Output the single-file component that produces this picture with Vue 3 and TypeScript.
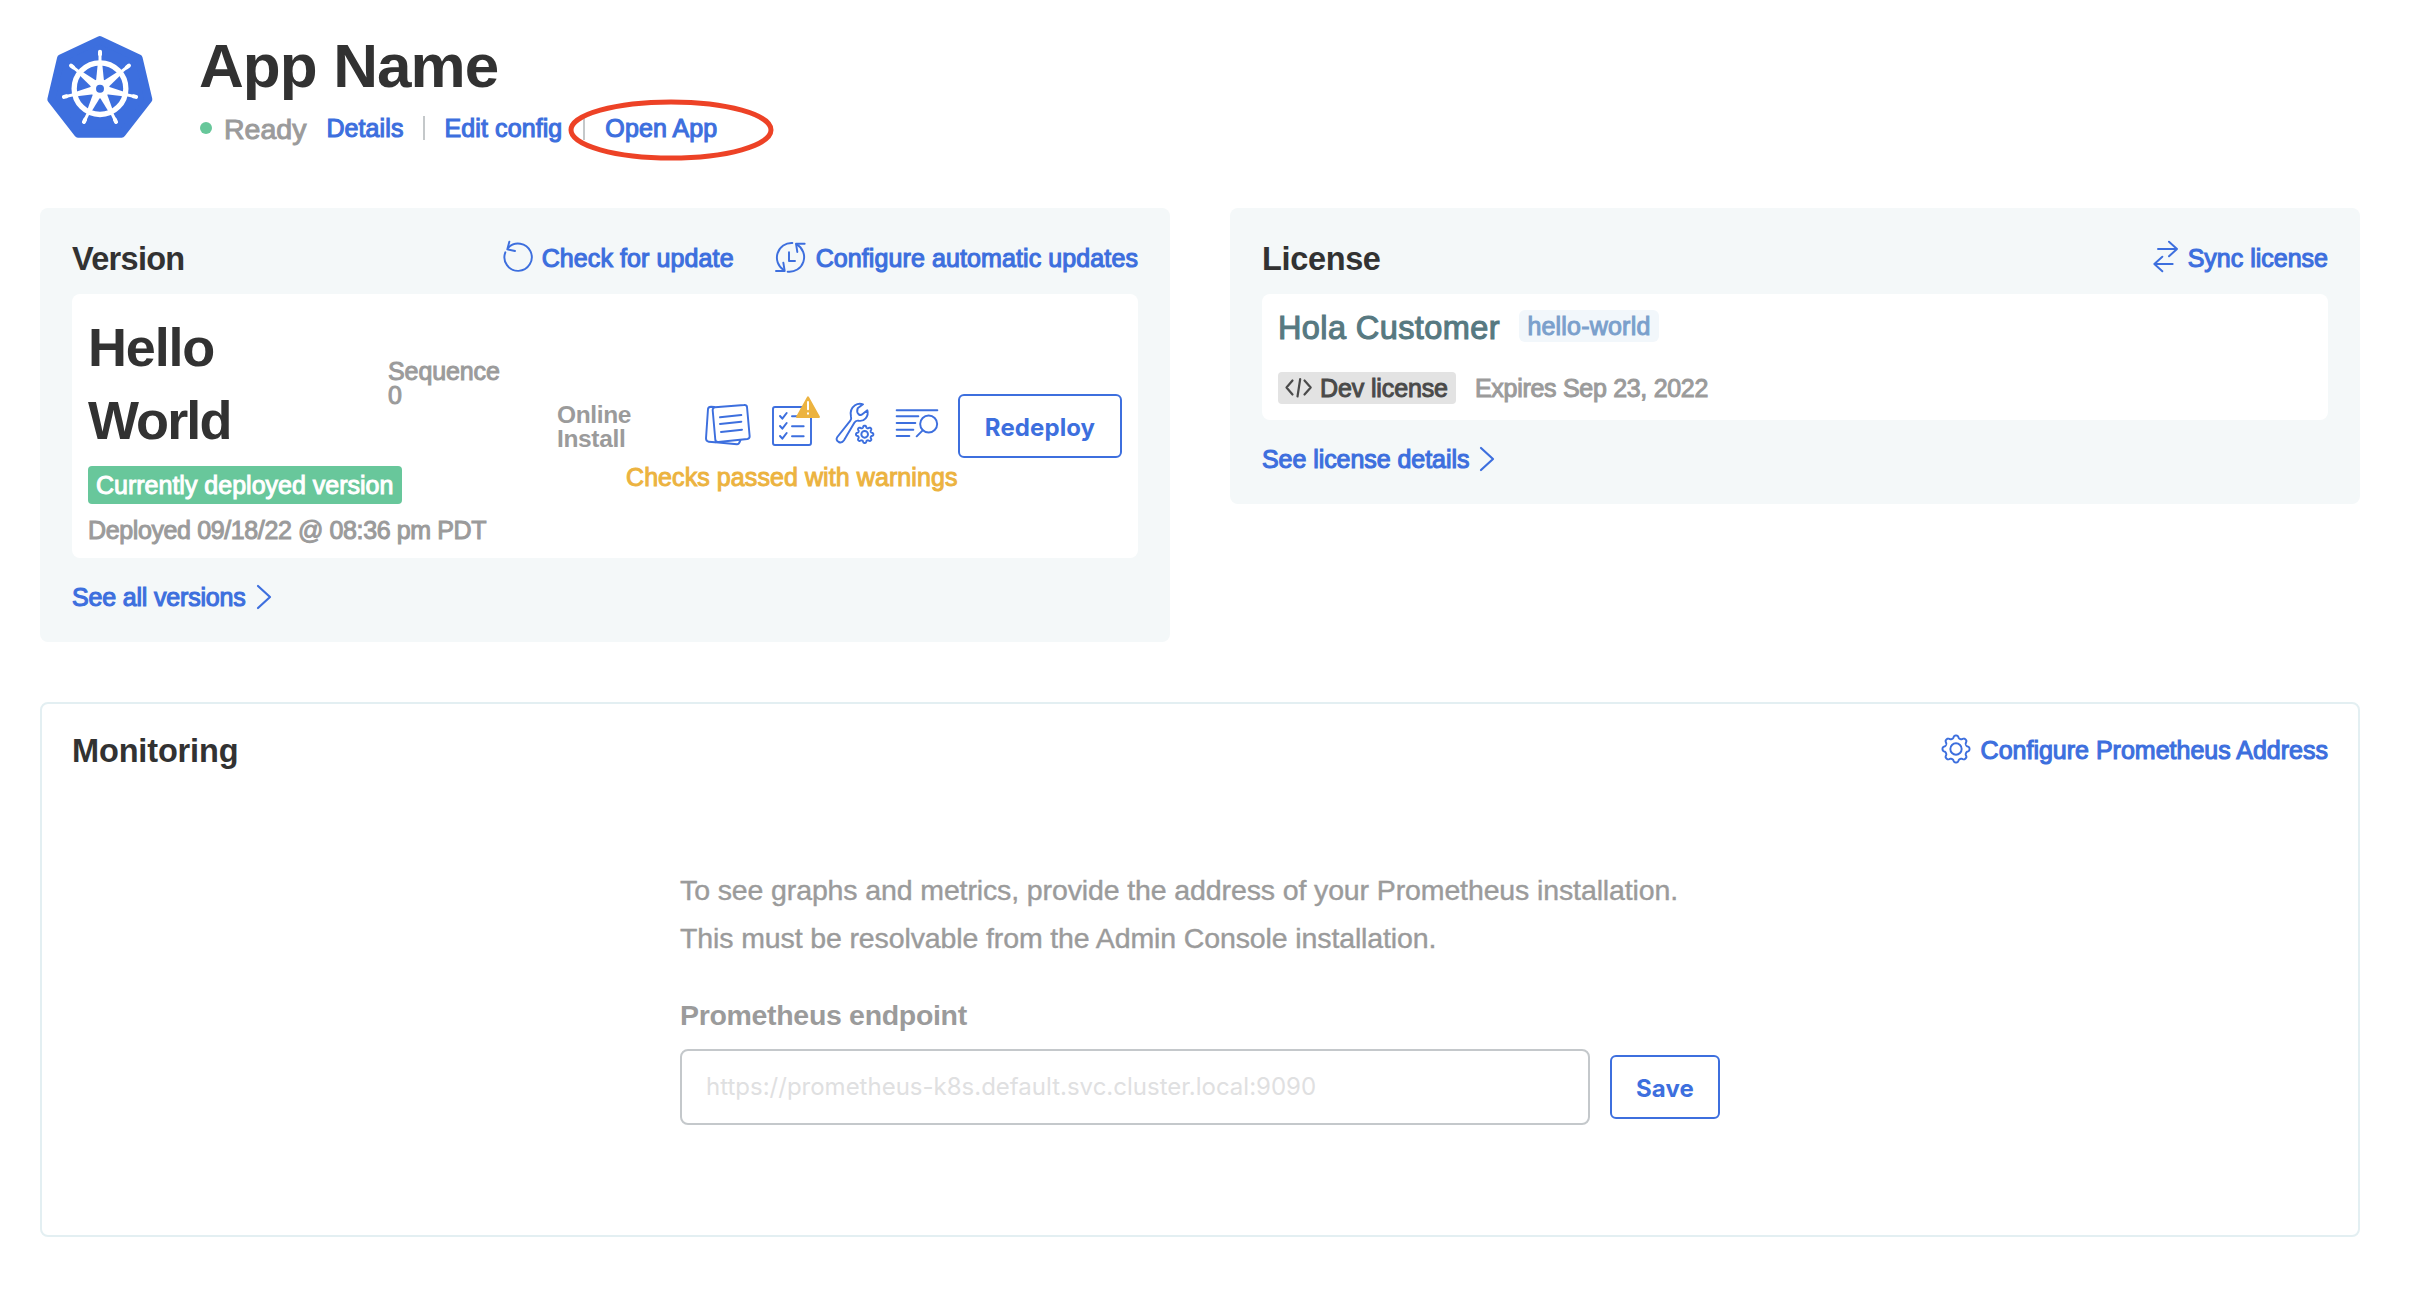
<script setup lang="ts">
import { ref } from 'vue'

const endpoint = ref('')

const spokes = Array.from({ length: 7 }, (_, i) => (i * 360) / 7)

function gearPath(cx: number, cy: number, radius: number, depth: number): string {
  const points: string[] = []
  for (let i = 0; i < 192; i++) {
    const a = (i / 192) * Math.PI * 2
    const r = radius + depth * (Math.tanh(1.6 * Math.cos(a * 8)) / Math.tanh(1.6))
    points.push(`${(cx + r * Math.sin(a)).toFixed(2)} ${(cy - r * Math.cos(a)).toFixed(2)}`)
  }
  return `M${points.join('L')}Z`
}

const smallGear = gearPath(554, 643, 23, 3)
const largeGear = gearPath(45, 45, 36.5, 4)
</script>

<template>
  <main class="page">
    <header class="head">
      <svg class="logo" viewBox="48 42 324 318" width="108" height="106">
        <polygon
          points="209.500,60 326,115 355,238 275,341 144,341 64,238 93,115"
          fill="#3d6fde" stroke="#3d6fde" stroke-width="24" stroke-linejoin="round"
        />
        <circle cx="210" cy="206" r="77.500" fill="none" stroke="#fff" stroke-width="16" />
        <g v-for="a in spokes" :key="a" :transform="`rotate(${a} 210 206)`">
          <path d="M198 184L203 134H217L222 184Z" fill="#fff" />
          <path d="M210 128V95" stroke="#fff" stroke-width="9" stroke-linecap="round" />
          <path d="M210 103V95" stroke="#fff" stroke-width="12" stroke-linecap="round" />
        </g>
        <circle cx="210" cy="206" r="29" fill="#fff" />
        <circle cx="210" cy="206" r="12" fill="#3d6fde" />
      </svg>
      <div class="head-text">
        <h1>App Name</h1>
        <div class="status">
          <span class="dot"></span>
          <span class="ready">Ready</span>
          <a class="link details">Details</a>
          <span class="bar"></span>
          <a class="link edit">Edit config</a>
          <span class="bar"></span>
          <span class="open">
            <a class="link">Open App</a>
            <svg class="ring" viewBox="0 0 206 62" width="206" height="62">
              <ellipse cx="103" cy="31" rx="100" ry="28" fill="none" stroke="#ed4226" stroke-width="5" />
            </svg>
          </span>
        </div>
      </div>
    </header>

    <section class="cards">
      <div class="card version">
        <div class="card-head">
          <h2 class="h-version">Version</h2>
          <a class="link action">
            <svg viewBox="364 120 96 102" width="32" height="34" class="line check-icon">
              <path d="M377 157A41 41 0 1 0 385 144" />
              <path d="M389 125L383 148L406 153" />
            </svg>
            <span>Check for update</span>
          </a>
          <a class="link action auto">
            <svg viewBox="282 63 96 96" width="32" height="32" class="line">
              <path d="M337 69A44 44 0 0 0 311 150" />
              <path d="M323 155A44 44 0 0 0 350 73" />
              <path d="M288 153H314L310 128M374 71H348L352 96M327 97V123H345" />
            </svg>
            <span>Configure automatic updates</span>
          </a>
        </div>
        <div class="box version-box">
          <div class="name">
            <h3>Hello<br /><span class="second">World</span></h3>
            <span class="deployed"><span>Currently deployed version</span></span>
            <p class="muted when">Deployed 09/18/22 @ 08:36 pm PDT</p>
          </div>
          <p class="muted sequence">Sequence<br />0</p>
          <p class="source">Online<br />Install</p>
          <div class="tools">
            <div class="icons">
              <svg viewBox="70 546 150 132" width="50" height="44" class="line">
                <path d="M104 561L94 560Q86 560 85 567L79 655Q79 664 87 665L106 667" />
                <path d="M106 562L193 555Q201 554 202 561L210 649Q210 656 203 657L116 666Q108 666 107 660L99 570Q99 563 106 562Z" />
                <path d="M108 667L172 673Q178 673 182 661" />
                <path d="M121 592L185 585M121 612L185 605M124 636L187 629" />
              </svg>
              <svg viewBox="273 525 150 156" width="50" height="52" class="line checks">
                <rect x="279" y="561" width="114" height="114" rx="6" />
                <path d="M300 588L307 596L320 579M300 618L307 626L320 609M300 648L307 656L320 639" stroke-width="6" />
                <path d="M336 589H352M336 619H371M336 649H371" />
                <path d="M384 532L417 591H351Z" fill="#ecb340" stroke="#ecb340" />
                <path d="M384 546V568M384 580V581" stroke="#fff" stroke-width="6" />
              </svg>
              <svg viewBox="465 543 123 132" width="41" height="44" class="line wrench">
                <path d="M472 651L511 602Q515 597 513 590Q508 568 525 556Q536 548 549 553L533 565Q529 576 536 583Q542 587 547 583L562 571Q566 585 557 595Q548 605 535 602Q527 601 523 608L492 661Q486 670 476 666Q466 660 472 651Z" />
                <path :d="smallGear" />
                <circle cx="554" cy="643" r="10" />
              </svg>
              <svg viewBox="645 564 132 90" width="44" height="30" class="line logs">
                <path d="M650 571H772M650 589H715M650 609H706M650 629H700M650 648H688" />
                <circle cx="746" cy="612" r="25.500" />
                <path d="M728 631L710 649" />
              </svg>
            </div>
            <p class="warning">Checks passed with warnings</p>
          </div>
          <button class="btn redeploy">Redeploy</button>
        </div>
        <a class="link more">
          <span class="t-all">See all versions</span>
          <svg viewBox="0 0 16 26" width="16" height="26" class="chev"><path d="M2 2L14 13L2 24" /></svg>
        </a>
      </div>

      <div class="card license">
        <div class="card-head">
          <h2 class="h-license">License</h2>
          <a class="link action sync">
            <svg viewBox="156 120 78 99" width="26" height="33" class="line">
              <path d="M171 147H228M204 125L228 147L204 169M215 192H160M184 170L160 192L184 214" />
            </svg>
            <span>Sync license</span>
          </a>
        </div>
        <div class="box license-box">
          <div class="row customer-row">
            <span class="customer">Hola Customer</span>
            <span class="channel"><span>hello-world</span></span>
          </div>
          <div class="row">
            <span class="dev">
              <svg viewBox="65 177 28 22" width="28" height="22">
                <path d="M72.500 180.500L66.500 187.500L72.500 194.500M80.200 179L77.500 196.500M84.500 180.500L90.700 187.500L84.500 194.500" />
              </svg>
              <span>Dev license</span>
            </span>
            <span class="muted expires">Expires Sep 23, 2022</span>
          </div>
        </div>
        <a class="link more">
          <span class="t-lic">See license details</span>
          <svg viewBox="0 0 16 26" width="16" height="26" class="chev"><path d="M2 2L14 13L2 24" /></svg>
        </a>
      </div>
    </section>

    <section class="monitoring">
      <div class="card-head">
        <h2 class="h-monitoring">Monitoring</h2>
        <a class="link action prom">
          <svg viewBox="0 0 90 90" width="30" height="30" class="line">
            <path :d="largeGear" />
            <circle cx="45" cy="45" r="17" />
          </svg>
          <span>Configure Prometheus Address</span>
        </a>
      </div>
      <div class="form">
        <p class="intro">
          To see graphs and metrics, provide the address of your Prometheus installation.<br />
          This must be resolvable from the Admin Console installation.
        </p>
        <label class="label">Prometheus endpoint</label>
        <div class="row field">
          <input v-model="endpoint" type="text" placeholder="https://prometheus-k8s.default.svc.cluster.local:9090" />
          <button class="btn save">Save</button>
        </div>
      </div>
    </section>
  </main>
</template>

<style>
body {
  margin: 0;
  background: #fff;
}
</style>

<style scoped>
* {
  box-sizing: border-box;
}
.page {
  width: 2424px;
  height: 1298px;
  overflow: hidden;
  padding: 30px 64px 0 40px;
  background: #fff;
  color: #323232;
  font-family: 'Liberation Sans', Arial, sans-serif;
  font-size: 25px;
}
h1, h2, h3, p {
  margin: 0;
}
svg {
  display: block;
  flex: none;
  overflow: visible;
}
.line {
  fill: none;
  stroke: #3d6fde;
  stroke-width: 5.8;
  stroke-linecap: round;
  stroke-linejoin: round;
}
.row {
  display: flex;
  align-items: center;
}
.head {
  display: flex;
  height: 178px;
}
.logo {
  margin: 4px 0 0 6px;
}
.head-text {
  margin-left: 45px;
}
h1 {
  font-size: 62px;
  line-height: 72px;
  letter-spacing: -0.9px;
}
.status {
  display: flex;
  align-items: center;
  height: 24px;
  margin-top: 14px;
  white-space: nowrap;
}
.dot {
  width: 12px;
  height: 12px;
  margin-left: 1px;
  border-radius: 50%;
  background: #67c79a;
}
.ready {
  margin: 2px 0 0 12px;
  color: #9b9b9b;
  font-size: 28.500px;
  -webkit-text-stroke: 1px currentColor;
}
.link {
  color: #3d6fde;
  line-height: 32px;
  letter-spacing: 0.1px;
  white-space: nowrap;
  -webkit-text-stroke: 1.100px currentColor;
}
.details {
  margin-left: 20px;
}
.bar {
  width: 2px;
  height: 24px;
  margin: 0 20px;
  background: #c4c8ca;
}
.details + .bar {
  margin-left: 19px;
}
.edit + .bar {
  margin-left: 21px;
}
.open {
  position: relative;
}
.ring {
  position: absolute;
  left: -37px;
  top: -13px;
}
.cards {
  display: flex;
  gap: 60px;
  align-items: flex-start;
}
.card {
  width: 1130px;
  padding: 32px;
  border-radius: 8px;
  background: #f4f8f9;
}
.version {
  height: 434px;
}
.license {
  height: 296px;
}
.card-head {
  display: flex;
  align-items: center;
  height: 36px;
}
h2 {
  flex: 1;
  font-size: 32.500px;
  line-height: 36px;
  padding-top: 2px;
}
.h-version {
  letter-spacing: -0.7px;
}
.h-license {
  letter-spacing: -0.35px;
}
.h-monitoring {
  letter-spacing: -0.15px;
}
.action {
  display: flex;
  align-items: center;
}
.action svg {
  margin-right: 9px;
}
.auto {
  margin-left: 40px;
}
.auto svg {
  margin-right: 10px;
}
.action .check-icon,
.auto svg {
  margin-top: -2px;
}
.sync {
  letter-spacing: 0;
}
.sync svg {
  margin-top: -3px;
}
.box {
  display: flex;
  margin-top: 18px;
  border-radius: 8px;
  background: #fff;
}
.version-box {
  height: 264px;
  padding: 16px;
}
.name {
  width: 300px;
  white-space: nowrap;
}
h3 {
  font-size: 54px;
  line-height: 73px;
  padding-top: 1px;
  letter-spacing: -1.200px;
}
.second {
  letter-spacing: -1.900px;
}
.deployed {
  display: flex;
  width: 314px;
  height: 38px;
  margin-top: 9px;
  padding-left: 8px;
  border-radius: 4px;
  background: #68c79b;
  color: #fff;
  line-height: 38px;
  -webkit-text-stroke: 1px currentColor;
}
.muted {
  color: #9b9b9b;
  -webkit-text-stroke: 1px currentColor;
}
.when {
  margin-top: 11px;
  line-height: 30px;
  letter-spacing: -0.38px;
}
.sequence {
  width: 169px;
  margin-top: 49px;
  line-height: 24px;
  letter-spacing: -0.1px;
}
.source {
  width: 68px;
  margin-top: 93px;
  color: #9b9b9b;
  font-size: 24.500px;
  font-weight: bold;
  line-height: 24px;
  letter-spacing: -0.35px;
}
.tools {
  width: 333px;
  margin-top: 84px;
}
.icons {
  display: flex;
  align-items: flex-start;
  height: 66px;
  padding-left: 78px;
}
.icons svg:first-child {
  margin-top: 8px;
}
.checks {
  margin: 1px 0 0 18px;
}
.wrench {
  margin: 7px 0 0 14px;
}
.logs {
  margin: 14px 0 0 19px;
}
.warning {
  padding-left: 1px;
  color: #ecb340;
  line-height: 34px;
  letter-spacing: 0.08px;
  white-space: nowrap;
  -webkit-text-stroke: 1px currentColor;
}
.btn {
  height: 64px;
  padding: 2px 0 0;
  border: 2px solid #3d6fde;
  border-radius: 6px;
  background: #fff;
  color: #3d6fde;
  font: bold 24px Inter, sans-serif;
  letter-spacing: 0.1px;
}
.redeploy {
  width: 164px;
  margin-top: 84px;
  flex: none;
}
.more {
  display: flex;
  align-items: center;
  height: 32px;
  margin-top: 23px;
}
.t-all {
  letter-spacing: -0.18px;
}
.t-lic {
  letter-spacing: -0.06px;
}
.chev {
  margin-left: 10px;
  fill: none;
  stroke: #3d6fde;
  stroke-width: 2.2;
  stroke-linecap: round;
  stroke-linejoin: round;
}
.license-box {
  flex-direction: column;
  height: 126px;
  padding: 16px;
}
.customer-row {
  height: 32px;
  margin-bottom: 30px;
}
.customer {
  padding-top: 3px;
  color: #577981;
  font-size: 32.500px;
  line-height: 36px;
  letter-spacing: 0.4px;
  -webkit-text-stroke: 1.100px currentColor;
}
.channel {
  width: 140px;
  height: 32px;
  margin-left: 19px;
  border-radius: 6px;
  background: #f2f7fb;
  color: #7ba0cc;
  line-height: 32px;
  letter-spacing: 0.2px;
  text-align: center;
  -webkit-text-stroke: 1px currentColor;
}
.dev {
  display: flex;
  align-items: center;
  width: 178px;
  height: 32px;
  padding-left: 7px;
  border-radius: 4px;
  background: #e3e3e3;
  color: #4a4a4a;
  line-height: 32px;
  letter-spacing: -0.12px;
  -webkit-text-stroke: 1px currentColor;
}
.dev svg {
  margin-right: 7px;
  fill: none;
  stroke: #4a4a4a;
  stroke-width: 2.2;
  stroke-linecap: round;
  stroke-linejoin: round;
}
.expires {
  margin-left: 19px;
  letter-spacing: -0.3px;
}
.monitoring {
  width: 2320px;
  height: 535px;
  margin-top: 60px;
  padding: 28px 30px;
  border: 2px solid #e3eff2;
  border-radius: 8px;
}
.prom {
  letter-spacing: 0;
}
.prom svg {
  margin: -2px 10px 0 0;
}
.form {
  width: 1044px;
  margin: 98px 0 0 608px;
}
.intro {
  color: #9b9b9b;
  font-size: 28.500px;
  line-height: 48px;
  letter-spacing: -0.12px;
  white-space: nowrap;
  -webkit-text-stroke: 0.4px currentColor;
}
.label {
  display: block;
  margin-top: 35px;
  color: #9b9b9b;
  font-size: 28.500px;
  font-weight: bold;
  line-height: 36px;
  letter-spacing: -0.32px;
}
.field {
  margin-top: 16px;
}
input {
  width: 910px;
  height: 76px;
  margin-right: 20px;
  padding: 0 24px 2px;
  border: 2px solid #c4c8cb;
  border-radius: 8px;
  font: 24px Inter, sans-serif;
}
input::placeholder {
  color: #dfe0e1;
}
.save {
  width: 110px;
}
</style>
